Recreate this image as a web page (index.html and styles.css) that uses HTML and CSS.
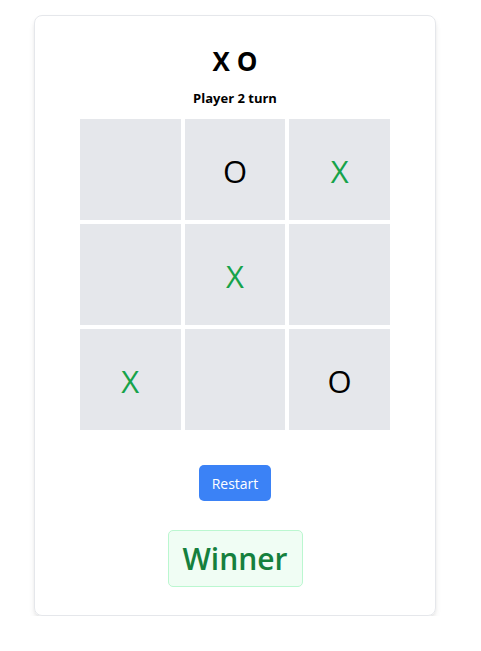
FILE: index.html
```html
<!DOCTYPE html>
<html>
<head>
<meta charset="utf-8">
<link rel="stylesheet" href="styles.css">
</head>
<body>
<div class="card">
  <h1 class="title">X O</h1>
  <p class="status">Player 2 turn</p>
  <div class="board">
    <div class="cell"></div>
    <div class="cell o">O</div>
    <div class="cell x">X</div>
    <div class="cell"></div>
    <div class="cell x">X</div>
    <div class="cell"></div>
    <div class="cell x">X</div>
    <div class="cell"></div>
    <div class="cell o">O</div>
  </div>
  <button class="restart">Restart</button>
  <div class="winner">Winner</div>
</div>
</body>
</html>
```

FILE: styles.css
```css
body {
  margin: 0;
  font-family: "Open Sans", "Noto Sans", sans-serif;
  background: #fff;
  color: #000;
}
.card {
  margin: 15px 0 0 34px;
  width: 402px;
  box-sizing: border-box;
  border: 1px solid #e5e7eb;
  border-radius: 8px;
  box-shadow: 0 4px 6px -1px rgba(0,0,0,0.1), 0 2px 4px -2px rgba(0,0,0,0.1);
  padding: 29px 0 28px;
  display: flex;
  flex-direction: column;
  align-items: center;
}
.title {
  margin: 0;
  font-size: 26px;
  line-height: 32px;
  font-weight: 700;
}
.status {
  margin: 11px 0 0;
  font-size: 13px;
  line-height: 20px;
  font-weight: 700;
}
.board {
  margin-top: 11px;
  width: 310px;
  display: grid;
  grid-template-columns: repeat(3, 1fr);
  grid-template-rows: repeat(3, 101px);
  gap: 4px;
}
.cell {
  background: #e5e7eb;
  display: flex;
  align-items: center;
  justify-content: center;
  font-size: 31px;
  line-height: 1;
  padding-top: 3px;
  box-sizing: border-box;
}
.cell.x { color: #16a34a; }
.cell.o { color: #000; }
.restart {
  margin-top: 35px;
  width: 72px;
  height: 36px;
  border: none;
  border-radius: 5px;
  background: #3b82f6;
  color: #fff;
  font-family: inherit;
  font-size: 14px;
  padding: 0;
}
.winner {
  margin-top: 29px;
  width: 135px;
  height: 57px;
  box-sizing: border-box;
  border: 1px solid #bbf7d0;
  border-radius: 5px;
  background: #f0fdf4;
  color: #15803d;
  font-size: 30px;
  font-weight: 600;
  display: flex;
  align-items: center;
  justify-content: center;
}
```
